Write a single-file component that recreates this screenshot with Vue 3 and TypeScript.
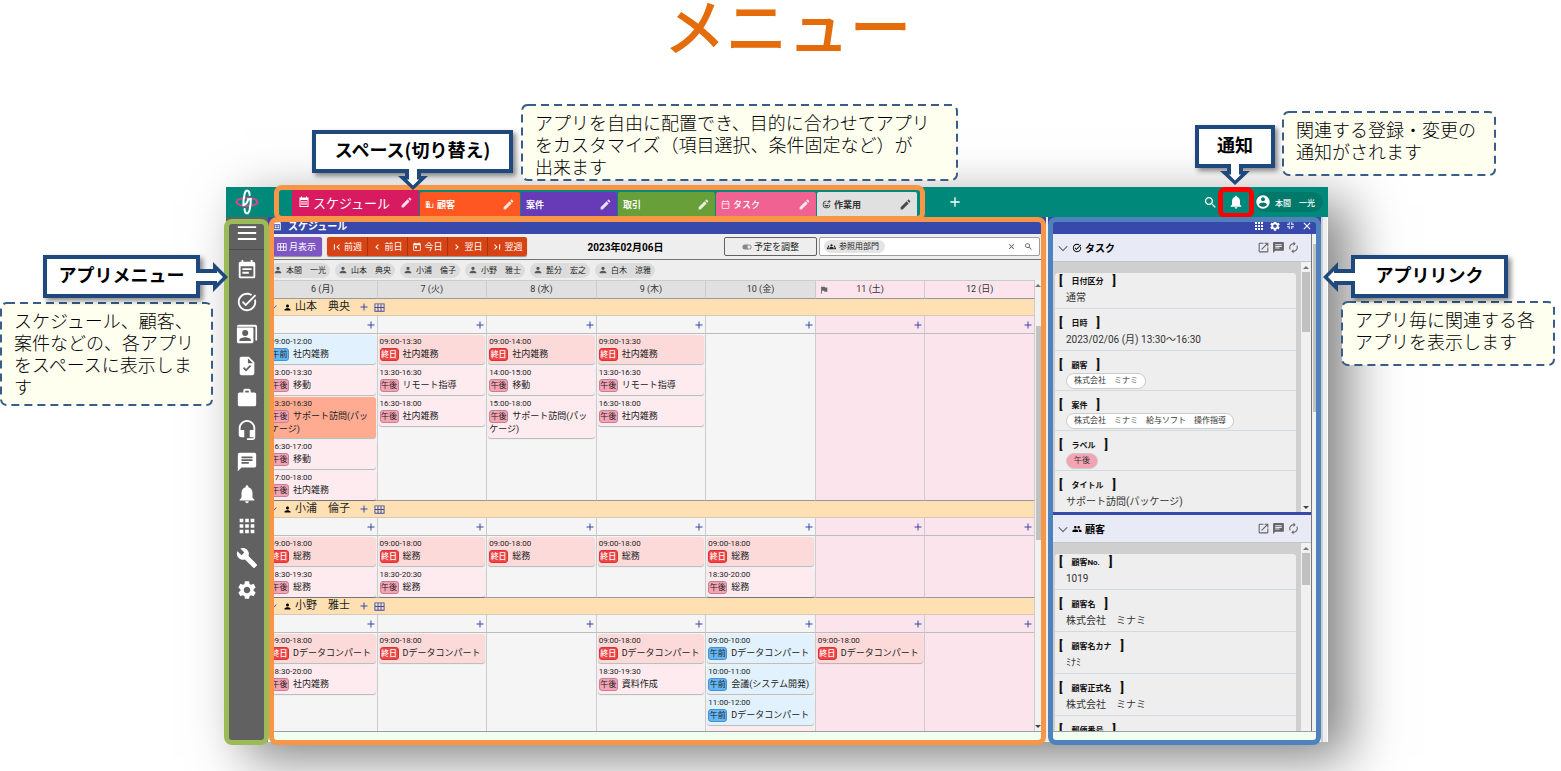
<script setup lang="ts">
import { h, ref } from 'vue'

const shapes: Record<string, string> = {
  menu: 'M2 4.500H22V6.500H2zM2 11H22V13H2zM2 17.500H22V19.500H2z',
  note: 'M14 14H7V16H14M19 19H5V8H19M19 3H18V1H16V3H8V1H6V3H5C3.890 3 3 3.900 3 5V19A2 2 0 0 0 5 21H19A2 2 0 0 0 21 19V5C21 3.890 20.100 3 19 3M17 10H7V12H17V10Z',
  task: 'M22 5.180L10.590 16.600l-4.240-4.240l1.410-1.410l2.830 2.830l10-10L22 5.180zM19.790 10.220C19.920 10.790 20 11.390 20 12c0 4.420-3.580 8-8 8s-8-3.580-8-8c0-4.420 3.580-8 8-8c1.580 0 3.040.46 4.280 1.250l1.440-1.440C16.100 2.670 14.130 2 12 2C6.480 2 2 6.480 2 12c0 5.520 4.480 10 10 10s10-4.480 10-10c0-1.190-.22-2.330-.6-3.390L19.790 10.220z',
  contact: 'M3 2H21A2 2 0 0 1 23 4V19H21.200V4H1V4A2 2 0 0 1 3 2zM1 5H17.500A1.500 1.500 0 0 1 19 6.500V20.500A1.500 1.500 0 0 1 17.500 22H2.500A1.500 1.500 0 0 1 1 20.500zM10 7.500A3.300 3.300 0 1 0 10 14.100A3.300 3.300 0 1 0 10 7.500M3.800 19.500H16.200V18.600C16.200 16.600 12 15.600 10 15.600S3.800 16.600 3.800 18.600z',
  fileCheck: 'M14 2H6c-1.100 0-2 .9-2 2v16c0 1.100.89 2 1.990 2H18c1.100 0 2-.9 2-2V8l-6-6zm-3.060 16L7.400 14.460l1.410-1.410 2.120 2.120 4.240-4.240 1.410 1.410L10.940 18zM13 9V3.500L18.500 9H13z',
  briefcase: 'M10 2H14A2 2 0 0 1 16 4V6H20A2 2 0 0 1 22 8V19A2 2 0 0 1 20 21H4C2.890 21 2 20.100 2 19V8C2 6.890 2.890 6 4 6H8V4C8 2.890 8.890 2 10 2M14 6V4H10V6H14Z',
  headset: 'M12 1C7 1 3 5 3 10V17A3 3 0 0 0 6 20H9V12H5V10A7 7 0 0 1 12 3A7 7 0 0 1 19 10V12H15V20H19V21H12V23H18A3 3 0 0 0 21 20V10C21 5 16.970 1 12 1Z',
  chat: 'M20 2H4c-1.100 0-1.990.9-1.990 2L2 22l4-4h14c1.100 0 2-.9 2-2V4c0-1.100-.9-2-2-2zM6 9h12v2H6V9zm8 5H6v-2h8v2zm4-6H6V6h12v2z',
  bell: 'M12 22c1.100 0 2-.9 2-2h-4c0 1.100.89 2 2 2zm6-6v-5c0-3.070-1.640-5.640-4.500-6.320V4c0-.83-.67-1.500-1.500-1.500s-1.500.67-1.500 1.500v.68C7.630 5.360 6 7.920 6 11v5l-2 2v1h16v-1l-2-2z',
  apps: 'M4 8h4V4H4v4zm6 12h4v-4h-4v4zm-6 0h4v-4H4v4zm0-6h4v-4H4v4zm6 0h4v-4h-4v4zm6-10v4h4V4h-4zm-6 4h4V4h-4v4zm6 6h4v-4h-4v4zm0 6h4v-4h-4v4z',
  wrench: 'M22.700 19l-9.100-9.100c.9-2.300.4-5-1.500-6.900-2-2-5-2.400-7.400-1.300L9 6 6 9 1.600 4.700C.4 7.100.9 10.100 2.900 12.100c1.900 1.900 4.600 2.400 6.900 1.500l9.100 9.100c.4.4 1 .4 1.400 0l2.300-2.300c.5-.4.5-1.100.1-1.400z',
  gear: 'M19.140 12.940c.04-.3.06-.61.06-.94 0-.32-.02-.64-.07-.94l2.030-1.580c.18-.14.23-.41.12-.61l-1.920-3.320c-.12-.22-.37-.29-.59-.22l-2.390.96c-.5-.38-1.030-.7-1.620-.94l-.36-2.540c-.04-.24-.24-.41-.48-.41h-3.840c-.24 0-.43.17-.47.41l-.36 2.540c-.59.24-1.130.57-1.620.94l-2.390-.96c-.22-.08-.47 0-.59.22L2.740 8.870c-.12.21-.08.47.12.61l2.030 1.580c-.05.3-.09.63-.09.94s.02.64.07.94l-2.030 1.580c-.18.14-.23.41-.12.61l1.920 3.320c.12.22.37.29.59.22l2.390-.96c.5.38 1.030.7 1.620.94l.36 2.540c.05.24.24.41.48.41h3.840c.24 0 .44-.17.47-.41l.36-2.540c.59-.24 1.130-.56 1.620-.94l2.390.96c.22.08.47 0 .59-.22l1.920-3.320c.12-.22.07-.47-.12-.61l-2.010-1.580zM12 15.600c-1.980 0-3.600-1.620-3.600-3.600s1.620-3.600 3.600-3.600 3.600 1.620 3.600 3.600-1.620 3.600-3.600 3.600z',
  pencil: 'M3 17.250V21h3.750L17.810 9.940l-3.750-3.750L3 17.250zM20.710 7.040c.39-.39.39-1.020 0-1.410l-2.340-2.340c-.39-.39-1.020-.39-1.410 0l-1.830 1.830 3.750 3.750 1.830-1.830z',
  search: 'M15.500 14h-.79l-.28-.27C15.410 12.590 16 11.110 16 9.500 16 5.910 13.090 3 9.500 3S3 5.910 3 9.500 5.910 16 9.500 16c1.610 0 3.090-.59 4.230-1.570l.27.28v.79l5 4.990L20.490 19l-4.990-5zm-6 0C7.010 14 5 11.990 5 9.500S7.010 5 9.500 5 14 7.010 14 9.500 11.990 14 9.500 14z',
  account: 'M12 2C6.480 2 2 6.480 2 12s4.480 10 10 10 10-4.480 10-10S17.520 2 12 2zm0 3c1.660 0 3 1.340 3 3s-1.340 3-3 3-3-1.340-3-3 1.340-3 3-3zm0 14.200c-2.500 0-4.710-1.280-6-3.220.03-1.990 4-3.080 6-3.080 1.990 0 5.970 1.090 6 3.080-1.290 1.940-3.500 3.220-6 3.220z',
  person: 'M12 12c2.210 0 4-1.790 4-4s-1.790-4-4-4-4 1.790-4 4 1.790 4 4 4zm0 2c-2.670 0-8 1.340-8 4v2h16v-2c0-2.660-5.330-4-8-4z',
  people: 'M16 11c1.660 0 2.990-1.340 2.990-3S17.660 5 16 5c-1.660 0-3 1.340-3 3s1.340 3 3 3zm-8 0c1.660 0 2.990-1.340 2.990-3S9.660 5 8 5C6.340 5 5 6.340 5 8s1.340 3 3 3zm0 2c-2.330 0-7 1.170-7 3.500V19h14v-2.500c0-2.330-4.670-3.500-7-3.500zm8 0c-.29 0-.62.02-.97.05 1.160.84 1.970 1.970 1.970 3.450V19h6v-2.500c0-2.330-4.670-3.500-7-3.500z',
  groups: 'M12 6a3 3 0 1 1 0 6a3 3 0 0 1 0-6zM4 9a2 2 0 1 1 0 4a2 2 0 0 1 0-4zM20 9a2 2 0 1 1 0 4a2 2 0 0 1 0-4zM6 19V16.500C6 14.500 9 13.300 12 13.300S18 14.500 18 16.500V19zM0 19V16.500C0 15 2 14 5 14.200C4.500 15 4.500 16 4.500 19zM24 19V16.500C24 15 22 14 19 14.200C19.500 15 19.500 16 19.500 19z',
  openNew: 'M19 19H5V5h7V3H5c-1.110 0-2 .9-2 2v14c0 1.100.89 2 2 2h14c1.100 0 2-.9 2-2v-7h-2v7zM14 3v2h3.590l-9.830 9.830 1.410 1.410L19 6.410V10h2V3h-7z',
  refresh: 'M12 6v3l4-4-4-4v3c-4.420 0-8 3.580-8 8 0 1.570.46 3.030 1.240 4.260L6.700 14.800c-.45-.83-.7-1.790-.7-2.800 0-3.310 2.690-6 6-6zm6.760 1.740L17.300 9.200c.44.84.7 1.790.7 2.800 0 3.310-2.690 6-6 6v-3l-4 4 4 4v-3c4.420 0 8-3.580 8-8 0-1.570-.46-3.030-1.240-4.260z',
  flag: 'M14.400 6L14 4H5v17h2v-7h5.600l.4 2h7V6z',
  shrink: 'M3 14h7v7H7.500v-4.500H3zM3 7.500h4.500V3H10v7H3zM14 14h7v2.500h-4.500V21H14zM14 3h2.500v4.500H21V10h-7z',
  first: 'M19 17L14 12l5-5L17.300 5.300l-6.700 6.700 6.700 6.700zM4.500 5.500h2.500v13H4.500z',
  last: 'M5 7L10 12l-5 5L6.700 18.700l6.700-6.700L6.700 5.300zM17 5.500h2.500v13H17z',
  prev: 'M16.200 7.200L14.400 5.400l-6.600 6.600 6.600 6.600 1.800-1.800L11.400 12z',
  next: 'M7.800 16.800L12.600 12 7.800 7.200 9.600 5.400l6.600 6.600-6.600 6.600z',
  today: 'M19 3h-1V1h-2v2H8V1H6v2H5c-1.110 0-1.990.9-1.990 2L3 19c0 1.100.89 2 2 2h14c1.100 0 2-.9 2-2V5c0-1.100-.9-2-2-2zm0 16H5V8h14v11zM7 10h5v5H7z',
  day: 'M20 3h-1V1h-2v2H7V1H5v2H4c-1.100 0-2 .9-2 2v16c0 1.100.9 2 2 2h16c1.100 0 2-.9 2-2V5c0-1.100-.9-2-2-2zm0 2v4H4V5zm0 16H4V11h16v10z',
  calendar: 'M19 3h-1V1h-2v2H8V1H6v2H3v19h18V3h-2zm0 17H5V8h14zM6.500 10h3v3h-3zm4 0h3v3h-3zm4 0h3v3h-3zm-8 4.500h3v3h-3zm4 0h3v3h-3zm4 0h3v3h-3z',
  building: 'M12 7V3H2v18h20V9H12zM6 19H4v-2h2v2zm0-4H4v-2h2v2zm0-4H4V9h2v2zm0-4H4V5h2v2zm4 12H8v-2h2v2zm0-4H8v-2h2v2zm0-4H8V9h2v2zm0-4H8V5h2v2zm10 12h-8v-2h2v-2h-2v-2h2v-2h-2V9h8v10z',
  grid: 'M1 3H23V21H1zM3 5V11H7.700V5zM9.700 5V11H14.300V5zM16.300 5V11H21V5zM3 13V19H7.700V13zM9.700 13V19H14.300V13zM16.300 13V19H21V13z',
  plus: 'M19 13h-6v6h-2v-6H5v-2h6V5h2v6h6z',
  close: 'M19 6.400L17.600 5 12 10.600 6.400 5 5 6.400 10.600 12 5 17.600 6.400 19 12 13.400 17.600 19 19 17.600 13.400 12z',
  down: 'M2.500 7L1 8.500 12 19.500 23 8.500 21.500 7 12 16.500z',
  toggle: 'M17 6H7a6 6 0 0 0 0 12h10a6 6 0 0 0 0-12zM17 16a4 4 0 1 1 0-8a4 4 0 0 1 0 8z',
  smile: 'M12 2a10 10 0 1 0 10 10h-2a8 8 0 1 1-8-8zM8 8a1.600 1.600 0 1 0 0 3.200A1.600 1.600 0 0 0 8 8zM16 8a1.600 1.600 0 1 0 0 3.200A1.600 1.600 0 0 0 16 8zM6.500 13.500C8 19 16 19 17.500 13.500zM18 0h2v3h3v2h-3v3h-2V5h-3V3h3z',
}

const Icon = (props: { name: string }) =>
  h('svg', { class: 'icon', viewBox: '0 0 24 24', 'aria-hidden': 'true' }, [
    h('path', { d: shapes[props.name], 'fill-rule': 'evenodd' }),
  ])
Icon.props = ['name']

const tabs = [
  { label: 'スケジュール', icon: 'calendar', tone: 'pink', current: true },
  { label: '顧客', icon: 'building', tone: 'orange' },
  { label: '案件', icon: '', tone: 'purple' },
  { label: '取引', icon: '', tone: 'green' },
  { label: 'タスク', icon: 'day', tone: 'rose', regular: true },
  { label: '作業用', icon: 'smile', tone: 'grey' },
]

const sideApps = [
  { icon: 'note', label: 'スケジュール' },
  { icon: 'task', label: 'タスク' },
  { icon: 'contact', label: '顧客' },
  { icon: 'fileCheck', label: '案件' },
  { icon: 'briefcase', label: '取引' },
  { icon: 'headset', label: 'サポート' },
  { icon: 'chat', label: 'メッセージ' },
  { icon: 'bell', label: '通知' },
  { icon: 'apps', label: 'アプリ一覧' },
  { icon: 'wrench', label: 'ツール' },
  { icon: 'gear', label: '設定' },
]

const moves = [
  { icon: 'first', label: '前週' },
  { icon: 'prev', label: '前日' },
  { icon: 'today', label: '今日' },
  { icon: 'next', label: '翌日' },
  { icon: 'last', label: '翌週' },
]

const members = ['本間　一光', '山本　典央', '小浦　倫子', '小野　雅士', '髭分　宏之', '白木　涼雅']
const days = ['6 (月)', '7 (火)', '8 (水)', '9 (木)', '10 (金)', '11 (土)', '12 (日)']

type Kind = 'am' | 'pm' | 'all'
interface Plan { time: string; kind: Kind; title: string; picked?: boolean }
const kindLabel: Record<Kind, string> = { am: '午前', pm: '午後', all: '終日' }
const p = (time: string, kind: Kind, title: string, picked = false): Plan => ({ time, kind, title, picked })

const people: { name: string; size: string; week: Plan[][] }[] = [
  {
    name: '山本　典央',
    size: 'tall',
    week: [
      [
        p('09:00-12:00', 'am', '社内雑務'),
        p('13:00-13:30', 'pm', '移動'),
        p('13:30-16:30', 'pm', 'サポート訪問(パッケージ)', true),
        p('16:30-17:00', 'pm', '移動'),
        p('17:00-18:00', 'pm', '社内雑務'),
      ],
      [p('09:00-13:30', 'all', '社内雑務'), p('13:30-16:30', 'pm', 'リモート指導'), p('16:30-18:00', 'pm', '社内雑務')],
      [p('09:00-14:00', 'all', '社内雑務'), p('14:00-15:00', 'pm', '移動'), p('15:00-18:00', 'pm', 'サポート訪問(パッケージ)')],
      [p('09:00-13:30', 'all', '社内雑務'), p('13:30-16:30', 'pm', 'リモート指導'), p('16:30-18:00', 'pm', '社内雑務')],
      [], [], [],
    ],
  },
  {
    name: '小浦　倫子',
    size: 'short',
    week: [
      [p('09:00-18:00', 'all', '総務'), p('18:30-19:30', 'pm', '総務')],
      [p('09:00-18:00', 'all', '総務'), p('18:30-20:30', 'pm', '総務')],
      [p('09:00-18:00', 'all', '総務')],
      [p('09:00-18:00', 'all', '総務')],
      [p('09:00-18:00', 'all', '総務'), p('18:30-20:00', 'pm', '総務')],
      [], [],
    ],
  },
  {
    name: '小野　雅士',
    size: 'tall',
    week: [
      [p('09:00-18:00', 'all', 'Dデータコンパート'), p('18:30-20:00', 'pm', '社内雑務')],
      [p('09:00-18:00', 'all', 'Dデータコンパート')],
      [],
      [p('09:00-18:00', 'all', 'Dデータコンパート'), p('18:30-19:30', 'pm', '資料作成')],
      [
        p('09:00-10:00', 'am', 'Dデータコンパート'),
        p('10:00-11:00', 'am', '会議(システム開発)'),
        p('11:00-12:00', 'am', 'Dデータコンパート'),
        p('13:00-14:00', 'pm', 'Dデータコンパート'),
      ],
      [p('09:00-18:00', 'all', 'Dデータコンパート')],
      [],
    ],
  },
]

const links = [
  {
    title: 'タスク',
    icon: 'task',
    part: 'first',
    fields: [
      { label: '日付区分', value: '通常' },
      { label: '日時', value: '2023/02/06 (月) 13:30～16:30' },
      { label: '顧客', value: '株式会社　ミナミ', look: 'chip' },
      { label: '案件', value: '株式会社　ミナミ　給与ソフト　操作指導', look: 'chip' },
      { label: 'ラベル', value: '午後', look: 'chip red' },
      { label: 'タイトル', value: 'サポート訪問(パッケージ)' },
    ],
  },
  {
    title: '顧客',
    icon: 'people',
    part: 'second',
    fields: [
      { label: '顧客No.', value: '1019' },
      { label: '顧客名', value: '株式会社　ミナミ' },
      { label: '顧客名カナ', value: 'ﾐﾅﾐ' },
      { label: '顧客正式名', value: '株式会社　ミナミ' },
      { label: '郵便番号', value: '' },
    ],
  },
]

const keyword = ref('')
</script>

<template>
  <div class="page">
    <h1 class="headline">メニュー</h1>

    <div class="window">
      <header class="topbar">
        <a class="logo" href="#" aria-label="ホーム">
          <svg viewBox="0 0 26 26" aria-hidden="true">
            <g fill="none" stroke-linecap="round">
              <ellipse cx="13" cy="13" rx="10.500" ry="4" stroke="#d6468c" stroke-width="2" />
              <path d="M15.600 6C15.600 .5 11.800 .2 10.600 5C9.800 8.500 9.300 12.500 9.400 16C12 15.500 13.600 13.500 14 10.500" stroke="#fff" stroke-width="2" />
              <path d="M10.600 20C10.600 25.500 14.400 25.800 15.600 21C16.400 17.500 16.900 13.500 16.800 10C15.500 10 14.600 10.200 14 10.500" stroke="#fff" stroke-width="2" />
            </g>
          </svg>
        </a>
        <nav class="tabs" aria-label="スペース">
          <div v-for="t in tabs" :key="t.label" class="tab" :class="[t.tone, { current: t.current, regular: t.regular }]">
            <a href="#"><Icon v-if="t.icon" :name="t.icon" />{{ t.label }}</a>
            <button type="button" :aria-label="t.label + 'を編集'"><Icon name="pencil" /></button>
          </div>
          <span class="frame tabs-frame"></span>
        </nav>
        <button class="add-space" type="button" aria-label="スペースを追加"><Icon name="plus" /></button>
        <div class="account-area">
          <button class="find" type="button" aria-label="検索"><Icon name="search" /></button>
          <button class="alerts" type="button" aria-label="通知"><Icon name="bell" /></button>
          <button class="user" type="button"><Icon name="account" />本間　一光</button>
        </div>
      </header>

      <div class="body">
        <aside class="sidebar">
          <button class="burger" type="button" aria-label="メニュー"><Icon name="menu" /></button>
          <button v-for="s in sideApps" :key="s.icon" type="button" :aria-label="s.label"><Icon :name="s.icon" /></button>
          <span class="frame side-frame"></span>
        </aside>

        <main class="schedule">
          <h2 class="bar"><Icon name="calendar" />スケジュール</h2>
          <div class="toolbar">
            <button class="month" type="button"><Icon name="grid" />月表示</button>
            <div class="moves">
              <button v-for="m in moves" :key="m.label" type="button"><Icon :name="m.icon" />{{ m.label }}</button>
            </div>
            <strong class="date">2023年02月06日</strong>
            <button class="adjust" type="button"><Icon name="toggle" />予定を調整</button>
            <div class="filter">
              <span class="dept"><Icon name="groups" />参照用部門</span>
              <input v-model="keyword" type="text" aria-label="部門を検索" />
              <button type="button" aria-label="クリア"><Icon name="close" /></button>
              <button type="button" aria-label="検索"><Icon name="search" /></button>
            </div>
          </div>
          <div class="members">
            <span v-for="m in members" :key="m" class="member"><Icon name="person" />{{ m }}</span>
          </div>
          <div class="calendar">
            <div class="clip">
              <table>
                <thead>
                  <tr>
                    <th v-for="(d, i) in days" :key="d" scope="col" :class="{ off: i > 4 }">
                      <Icon v-if="i === 5" class="flag" name="flag" />{{ d }}
                    </th>
                  </tr>
                </thead>
                <tbody v-for="who in people" :key="who.name">
                  <tr class="owner">
                    <th colspan="7" scope="rowgroup">
                      <div>
                        <Icon class="fold" name="down" /><Icon class="who" name="person" /><span>{{ who.name }}</span>
                        <button type="button" aria-label="追加"><Icon name="plus" /></button>
                        <button type="button" aria-label="表で見る"><Icon class="sheet" name="grid" /></button>
                      </div>
                    </th>
                  </tr>
                  <tr class="adders">
                    <td v-for="(d, i) in days" :key="d" :class="{ off: i > 4 }">
                      <button type="button" :aria-label="d + 'に追加'"><Icon name="plus" /></button>
                    </td>
                  </tr>
                  <tr class="plans" :class="who.size">
                    <td v-for="(list, i) in who.week" :key="i" :class="{ off: i > 4 }">
                      <article v-for="e in list" :key="e.time" class="plan" :class="[e.kind, { picked: e.picked }]">
                        <time>{{ e.time }}</time>
                        <p><span class="kind">{{ kindLabel[e.kind] }}</span>{{ e.title }}</p>
                      </article>
                    </td>
                  </tr>
                </tbody>
              </table>
            </div>
            <div class="scroll main-scroll"><i class="up"></i><b></b><i class="dn"></i></div>
          </div>
          <div class="foot"></div>
          <span class="frame main-frame"></span>
        </main>

        <aside class="links">
          <div class="bar tools">
            <button type="button" aria-label="一覧"><Icon name="apps" /></button>
            <button type="button" aria-label="設定"><Icon name="gear" /></button>
            <button type="button" aria-label="縮小"><Icon name="shrink" /></button>
            <button type="button" aria-label="閉じる"><Icon name="close" /></button>
          </div>
          <div class="link-body">
            <div class="sections">
              <section v-for="l in links" :key="l.title" :class="l.part">
                <h3>
                  <Icon class="fold" name="down" /><Icon class="mark" :name="l.icon" /><span>{{ l.title }}</span>
                  <button type="button" aria-label="開く"><Icon name="openNew" /></button>
                  <button type="button" aria-label="コメント"><Icon name="chat" /></button>
                  <button type="button" aria-label="更新"><Icon name="refresh" /></button>
                </h3>
                <div class="sheet-area">
                  <dl>
                    <div v-for="f in l.fields" :key="f.label">
                      <dt><b>[</b><span>{{ f.label }}</span><b>]</b></dt>
                      <dd><span :class="f.look">{{ f.value }}</span></dd>
                    </div>
                  </dl>
                  <div class="scroll"><i class="up"></i><b></b><i class="dn"></i></div>
                </div>
              </section>
            </div>
            <div class="outer-scroll"><b></b></div>
          </div>
          <div class="foot"></div>
          <span class="frame link-frame"></span>
        </aside>
        <div class="edge"></div>
      </div>
    </div>

    <div class="callout c-space">スペース(切り替え)
      <svg class="arrow-down" viewBox="0 0 30 21" aria-hidden="true"><path fill="#1f497d" d="M7 4H23V7H30L15 21L0 7H7z" /><path fill="#fff" d="M11 0H19V10.500H21L15 16.500L9 10.500H11z" /></svg>
    </div>
    <div class="callout c-notice">通知
      <svg class="arrow-down" viewBox="0 0 30 21" aria-hidden="true"><path fill="#1f497d" d="M7 4H23V7H30L15 21L0 7H7z" /><path fill="#fff" d="M11 0H19V10.500H21L15 16.500L9 10.500H11z" /></svg>
    </div>
    <div class="callout c-menu">アプリメニュー
      <svg class="arrow-side to-right" viewBox="0 0 32 30" aria-hidden="true"><path fill="#1f497d" d="M4 7H17V0L32 15L17 30V23H4z" /><path fill="#fff" d="M0 11H21V9L27 15L21 21V19H0z" /></svg>
    </div>
    <div class="callout c-link">アプリリンク
      <svg class="arrow-side to-left" viewBox="0 0 32 30" aria-hidden="true"><path fill="#1f497d" d="M28 7H15V0L0 15L15 30V23H28z" /><path fill="#fff" d="M32 11H11V9L5 15L11 21V19H32z" /></svg>
    </div>

    <p class="hint n-space"><svg aria-hidden="true"><rect width="100%" height="100%" rx="6" /></svg><span>アプリを自由に配置でき、目的に合わせてアプリ<br />をカスタマイズ（項目選択、条件固定など）が<br />出来ます</span></p>
    <p class="hint n-menu"><svg aria-hidden="true"><rect width="100%" height="100%" rx="6" /></svg><span>スケジュール、顧客、<br />案件などの、各アプリ<br />をスペースに表示しま<br />す</span></p>
    <p class="hint n-notice"><svg aria-hidden="true"><rect width="100%" height="100%" rx="6" /></svg><span>関連する登録・変更の<br />通知がされます</span></p>
    <p class="hint n-link"><svg aria-hidden="true"><rect width="100%" height="100%" rx="6" /></svg><span>アプリ毎に関連する各<br />アプリを表示します</span></p>
  </div>
</template>

<style>
body { margin: 0; background: #fff; }
</style>

<style scoped>
* { box-sizing: border-box; }
.page {
  position: relative;
  display: flex;
  flex-direction: column;
  height: 100vh;
  min-height: 560px;
  overflow: hidden;
  font-family: Roboto, "Noto Sans CJK JP", sans-serif;
  font-size: 8px;
  color: #222;
}
button { display: inline-flex; align-items: center; justify-content: center; margin: 0; padding: 0; border: 0; background: none; color: inherit; font: inherit; cursor: pointer; }
a { color: inherit; text-decoration: none; }
.icon { flex: none; width: 10px; height: 10px; fill: currentColor; }

.headline {
  flex: none;
  height: 187px;
  margin: 0 0 0 14px;
  font-family: "Noto Sans CJK JP", sans-serif;
  font-size: 62px;
  font-weight: 500;
  line-height: 48px;
  text-align: center;
  color: #e46c0a;
}

.window {
  flex: 1;
  min-height: 0;
  display: flex;
  flex-direction: column;
  margin: 0 233px 29px 226px;
  box-shadow: 20px 16px 50px rgba(0, 0, 0, .5);
}
.topbar { position: relative; z-index: 1; flex: none; display: flex; align-items: center; height: 30px; background: #00897b; color: #fff; }
.logo { width: 42px; text-align: center; }
.logo svg { display: block; width: 26px; height: 26px; margin: 0 auto; }
.tabs { position: relative; display: flex; align-items: flex-end; height: 30px; margin-left: 6px; padding: 0 7px 0 18px; }
.tab { display: flex; align-items: center; justify-content: space-between; width: 97px; height: 25px; margin-right: 1px; padding: 0 5px; border-radius: 2px 2px 0 0; font-size: 9px; font-weight: 700; }
.tab a { display: flex; align-items: center; gap: 3px; }
.tab .icon { width: 9px; height: 9px; }
.tab button .icon { width: 13px; height: 13px; opacity: .85; }
.tab.current { width: 127px; height: 27px; padding: 0 6px 3px; font-size: 13px; font-weight: 400; }
.tab.current .icon { width: 12px; height: 12px; }
.tab.current button .icon { width: 13px; height: 13px; }
.tab.regular { font-weight: 500; }
.pink { background: #d81b60; }
.tab.orange { width: 100px; background: #ff5722; }
.tab.purple { width: 96px; background: #673ab7; }
.green { background: #689f38; }
.tab.rose { width: 100px; background: #f06292; }
.tab.grey { width: 100px; background: #e0e0e0; color: #333; }
.add-space { width: 20px; height: 20px; margin-left: 20px; }
.add-space .icon { width: 16px; height: 16px; }
.account-area { display: flex; align-items: center; margin-left: auto; padding-right: 5px; }
.find { width: 15px; height: 20px; }
.find .icon { width: 15px; height: 15px; }
.alerts { width: 36px; height: 31px; border: 5px solid #f00; border-radius: 7px; }
.alerts .icon { width: 16px; height: 16px; }
.user { gap: 4px; height: 20px; margin-left: 1px; padding: 0 8px 0 0; border-radius: 10px; background: #00796b; font-size: 8px; font-weight: 500; }
.user .icon { width: 16px; height: 16px; }

.frame { position: absolute; z-index: 3; border: 5px solid #f79646; border-radius: 8px; pointer-events: none; }
.tabs-frame { inset: -2px 0 -4px; }

.body { flex: 1; min-height: 0; display: flex; background: #eee; }
.sidebar { position: relative; flex: none; display: flex; flex-direction: column; width: 42px; background: #616161; color: #fff; }
.sidebar button { flex: none; height: 32px; }
.sidebar .icon { width: 22px; height: 22px; }
.sidebar .burger { height: 33px; margin-bottom: 4px; border-bottom: 1px solid #4c4c4c; }
.side-frame { inset: 2px -1px -3px -2px; border-color: #9bbb59; }

.bar { flex: none; display: flex; align-items: center; height: 17px; margin: 0; background: #3949ab; color: #fff; }
.schedule { position: relative; z-index: 2; flex: 1; min-width: 0; display: flex; flex-direction: column; padding-right: 5px; background: #eee; }
h2.bar { gap: 6px; padding-left: 4px; margin-right: -5px; font-size: 10px; font-weight: 700; }
.main-frame { inset: 0 0 -3px 1px; }

.toolbar { flex: none; display: flex; align-items: center; height: 26px; padding: 0 1px 0 3px; border-bottom: 1px solid #757575; }
.month { gap: 2px; width: 51px; height: 19px; border-radius: 2px; background: #7e57c2; color: #fff; box-shadow: 0 1px 1px rgba(0, 0, 0, .4); font-size: 9px; }
.moves { display: flex; margin-left: 5px; border-radius: 2px; box-shadow: 0 1px 1px rgba(0, 0, 0, .4); }
.moves button { gap: 2px; width: 40px; height: 19px; border-left: 1px solid #a8330f; background: #d84315; color: #fff; font-size: 9px; }
.moves button:first-child { border-left: 0; border-radius: 2px 0 0 2px; }
.moves button:last-child { border-radius: 0 2px 2px 0; }
.date { flex: 1; text-align: center; font-size: 10px; font-weight: 700; color: #000; }
.adjust { gap: 2px; width: 93px; height: 19px; border: 1px solid #616161; border-radius: 2px; font-size: 9px; }
.adjust .icon { color: #888; }
.filter { display: flex; align-items: center; width: 221px; height: 19px; margin-left: 2px; padding: 0 2px 0 4px; border: 1px solid #9e9e9e; border-radius: 2px; background: #fff; }
.dept { flex: none; display: flex; align-items: center; gap: 3px; height: 13px; padding: 0 6px 0 3px; border-radius: 7px; background: #e4e4e4; line-height: 13px; }
.filter input { flex: 1; min-width: 0; height: 14px; padding: 0 4px; border: 0; outline: 0; background: none; font: inherit; }
.filter button { width: 17px; height: 17px; color: #555; }
.filter .icon { width: 9px; height: 9px; }

.members { flex: none; display: flex; align-items: center; gap: 5px; height: 20px; padding-left: 2px; }
.member { display: flex; align-items: center; gap: 3px; width: 60px; height: 15px; padding-left: 3px; border-radius: 8px; background: #dcdcdc; line-height: 15px; }
.member .icon { color: #555; }

.calendar { flex: 1; min-height: 0; display: flex; }
.clip { flex: 1; min-width: 0; overflow: hidden; background: #f5f5f5; }
table { width: 100%; table-layout: fixed; border-collapse: separate; border-spacing: 0; }
th, td { padding: 0; border-right: 1px solid #ccc; border-bottom: 1px solid #bdbdbd; vertical-align: top; font-weight: 400; }
thead th { position: relative; height: 19px; border-top: 1px solid #ccc; border-bottom-color: #999; background: #e0e0e0; vertical-align: middle; font-size: 9px; line-height: 17px; color: #333; }
.off, thead th.off { background: #fce4ec; }
.flag { position: absolute; top: 4px; left: 3px; color: #666; }
.owner th { height: 17px; background: #ffe0b2; text-align: left; border-bottom-color: #d6c9b5; }
.owner div { display: flex; align-items: center; height: 16px; font-size: 11px; line-height: 16px; }
.owner span { width: 63px; margin-left: 3px; }
.owner .icon { width: 9px; height: 9px; }
.owner .fold { width: 8px; height: 8px; margin: 0 6px 0 1px; color: #3949ab; }
.owner .who { color: #000; }
.owner button { width: 12px; height: 12px; margin-right: 3px; color: #3949ab; }
.owner button .icon, .adders .icon { width: 12px; height: 12px; }
.owner button .sheet { width: 11px; height: 11px; }
.adders td { height: 18px; text-align: right; }
.adders button { width: 12px; height: 17px; color: #3949ab; }
.plans td { padding: 1px 1px 0; border-bottom-color: #999; }
.plans.tall td { height: 166px; }
.plans.short td { height: 62px; }
.plan { min-height: 29px; margin-bottom: 2px; padding: 1px 0 2px 1px; border-radius: 3px; background: #fdebf0; box-shadow: 0 1px 1px rgba(0, 0, 0, .25); }
.plan:last-child { margin-bottom: 0; }
.plan time { display: block; font-size: 8px; line-height: 12px; }
.plan p { margin: 0; font-size: 9px; line-height: 13px; }
.plan.all { background: #fddada; }
.plan.am { background: #e1f1fd; }
.plan.picked { background: #ffab91; }
.kind { display: inline-block; width: 19px; height: 13px; margin-right: 4px; border: 1px solid #c97f92; border-radius: 3px; background: #f4a3b5; font-size: 8px; line-height: 11px; text-align: center; vertical-align: top; }
.all .kind { border-color: #d33; background: #f04444; color: #fff; font-weight: 500; }
.am .kind { border-color: #4a90cc; background: #64b5f6; }
.foot { flex: none; height: 11px; border-top: 1px solid #9e9e9e; background: #f0fff0; }

.scroll { position: relative; flex: none; display: flex; flex-direction: column; width: 10px; background: #f1f1f1; }
.scroll b { display: block; width: 8px; height: 60px; margin: 0 auto; background: #c1c1c1; }
.scroll i { width: 0; height: 0; margin: 4px auto 3px; border: 3px solid transparent; border-top: 0; border-bottom-color: #777; }
.scroll .dn { margin: auto auto 3px; border: 3px solid transparent; border-bottom: 0; border-top-color: #444; }
.second .scroll b { height: 32px; }
.second .scroll .dn { visibility: hidden; }
.main-scroll { width: 6px; }
.main-scroll b { width: 5px; height: 214px; margin-top: 36px; }

.links { position: relative; z-index: 2; flex: none; display: flex; flex-direction: column; width: 273px; margin-left: 2px; background: #eee; }
.tools { gap: 3px; justify-content: flex-end; padding-right: 8px; }
.tools button { width: 13px; height: 16px; }
.tools .icon { width: 12px; height: 12px; }
.tools button:nth-child(3) .icon { width: 9px; height: 9px; }
.link-body { flex: 1; min-height: 0; display: flex; padding: 0 5px; }
.sections { flex: 1; min-width: 0; display: flex; flex-direction: column; border-right: 1px solid #777; }
.outer-scroll { flex: none; width: 4px; background: #f1f1f1; }
.outer-scroll b { display: block; width: 3px; height: 168px; margin: 10px 0 0 1px; background: #c1c1c1; }
section { flex: none; display: flex; flex-direction: column; min-height: 0; overflow: hidden; }
.first { flex: none; height: 281px; border-bottom: 3px solid #3949ab; }
.second { flex: 1; }
h3 { flex: none; display: flex; align-items: center; height: 28px; margin: 0; padding: 0 10px 0 5px; border-bottom: 1px solid #c5c5c5; background: #e8eaf6; font-size: 10px; font-weight: 700; color: #000; }
h3 .fold { width: 10px; height: 10px; color: #444; }
h3 .mark { margin: 0 3px 0 4px; }
h3 span { flex: 1; }
h3 button { width: 15px; height: 16px; color: #666; }
h3 button .icon { width: 13px; height: 13px; }
.sheet-area { flex: 1; min-height: 0; display: flex; justify-content: space-between; background: #cfcfcf; }
dl { flex: 1; margin: 11px 5px 0 2px; overflow: hidden; border-radius: 3px 3px 0 0; background: #eee; }
dl > div { padding-top: 6px; border-bottom: 1px solid #d3dade; }
dl > div:first-child { padding-top: 0; }
dt { display: flex; align-items: center; gap: 9px; height: 15px; padding-left: 4px; font-size: 8px; font-weight: 700; color: #111; }
dt b { font-size: 12px; line-height: 14px; }
dd { margin: 0; padding-left: 11px; font-size: 10px; line-height: 20px; color: #333; }
.chip { display: block; width: fit-content; height: 16px; margin: 1px 0; padding: 0 7px; border: 1px solid #ccc; border-radius: 8px; background: #fff; font-size: 8px; line-height: 14px; }
.red { background: #f4a3b5; }
.link-frame { inset: 0 0 -3px; border-color: #4f81bd; }
.edge { flex: none; width: 7px; border-right: 1px solid #fff; border-left: 2px solid #ccd0d6; background: #eee; }

.callout {
  position: absolute;
  z-index: 6;
  display: flex;
  align-items: center;
  justify-content: center;
  height: 43px;
  padding-bottom: 5px;
  border: 4px solid #1f497d;
  background: #fff;
  box-shadow: 3px 3px 5px rgba(0, 0, 0, .45);
  font-family: "Noto Sans CJK JP", sans-serif;
  font-size: 18px;
  font-weight: 700;
  line-height: 24px;
  color: #000;
}
.callout svg { position: absolute; }
.arrow-down { top: 100%; left: calc(50% - 15px); width: 30px; height: 21px; }
.arrow-side { top: calc(50% - 15px); width: 32px; height: 30px; }
.to-right { left: 100%; }
.to-left { right: 100%; }
.c-space { top: 130px; left: 312px; width: 201px; }
.c-notice { top: 125px; right: 286px; width: 80px; }
.c-menu { top: 255px; left: 43px; width: 157px; }
.c-link { top: 255px; right: 53px; width: 157px; }

.hint {
  position: absolute;
  z-index: 5;
  margin: 0;
  padding: 7px 14px;
  font-family: "Noto Sans CJK JP", sans-serif;
  font-size: 18px;
  font-weight: 300;
  line-height: 22px;
  white-space: nowrap;
  color: #000;
}
.hint svg { position: absolute; inset: 1px; width: calc(100% - 2px); height: calc(100% - 2px); overflow: visible; }
.hint rect { fill: #fffff0; stroke: #385d8a; stroke-width: 2; stroke-dasharray: 8 5; }
.hint span { position: relative; }
.n-space { top: 104px; left: 521px; width: 437px; height: 77px; }
.n-menu { top: 302px; left: 0; width: 213px; height: 104px; }
.n-notice { top: 111px; right: 65px; width: 214px; height: 65px; }
.n-link { top: 301px; right: 6px; width: 214px; height: 65px; }
</style>
